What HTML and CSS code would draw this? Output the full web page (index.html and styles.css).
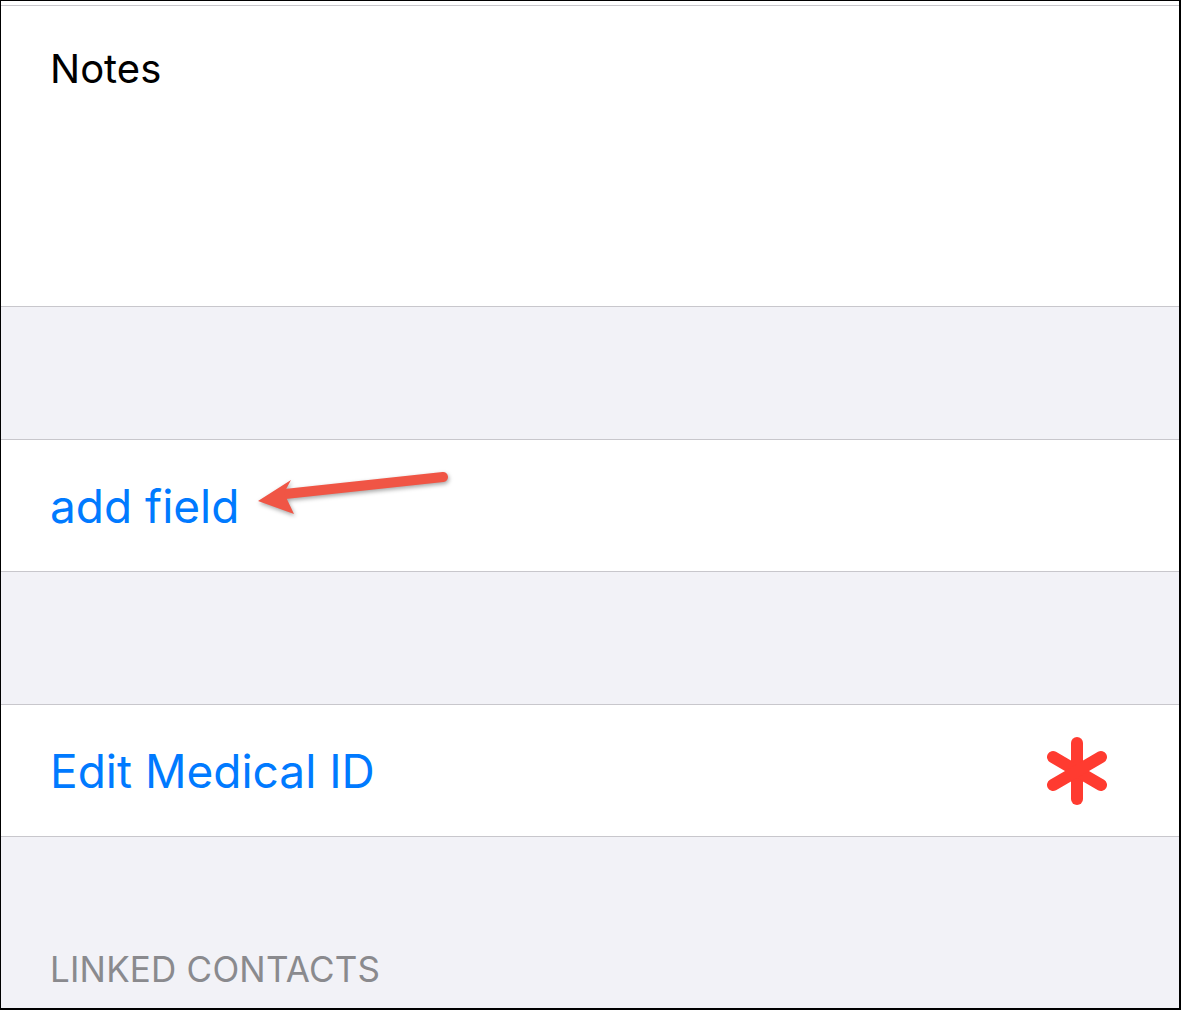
FILE: index.html
```html
<!DOCTYPE html>
<html>
<head>
<meta charset="utf-8">
<link rel="stylesheet" href="styles.css">
</head>
<body>
<div class="frame">
  <div class="top-strip"></div>
  <div class="cell notes-cell">
    <span class="label">Notes</span>
  </div>
  <div class="gap"></div>
  <div class="cell row add-row">
    <span class="link">add field</span>
    <svg class="arrow" width="220" height="60" viewBox="240 20 220 60">
      <line x1="442" y1="38" x2="284" y2="55" stroke="#f05545" stroke-width="10" stroke-linecap="round"/>
      <polygon points="257,62 290,41 283,54 293,75" fill="#f05545"/>
    </svg>
  </div>
  <div class="gap"></div>
  <div class="cell row med-row">
    <span class="link">Edit Medical ID</span>
    <svg class="star" width="72" height="72" viewBox="0 0 72 72">
      <g stroke="#ff3b30" stroke-width="12" stroke-linecap="round">
        <line x1="36" y1="8" x2="36" y2="64"/>
        <line x1="12" y1="22" x2="60" y2="50"/>
        <line x1="12" y1="50" x2="60" y2="22"/>
      </g>
    </svg>
  </div>
  <div class="footer-section">
    <span class="header">LINKED CONTACTS</span>
  </div>
</div>
</body>
</html>
```
FILE: styles.css
```css
html, body {
  margin: 0;
  padding: 0;
  background: #ffffff;
}
body {
  font-family: Inter, "Noto Sans", "Liberation Sans", sans-serif;
}
.frame {
  width: 1181px;
  height: 1010px;
  box-sizing: border-box;
  border-top: 1px solid #000;
  border-left: 1px solid #000;
  border-right: 2px solid #000;
  border-bottom: 2px solid #000;
  background: #f2f2f7;
  display: flex;
  flex-direction: column;
  overflow: hidden;
}
.top-strip {
  height: 4px;
  background: #ffffff;
  border-bottom: 1px solid #c8c7cc;
  flex: none;
}
.cell {
  background: #ffffff;
  border-bottom: 1px solid #c8c7cc;
  box-sizing: border-box;
  flex: none;
}
.notes-cell {
  height: 301px;
  padding: 39px 0 0 49px;
}
.label {
  font-size: 40px;
  line-height: 48px;
  color: #000;
  display: block;
}
.gap {
  height: 132px;
  flex: none;
}
.row {
  height: 133px;
  border-top: 1px solid #c8c7cc;
  padding: 0 66px 0 49px;
  display: flex;
  align-items: center;
  justify-content: space-between;
  position: relative;
}
.link {
  font-size: 46px;
  line-height: 54px;
  color: #007aff;
}
.arrow {
  position: absolute;
  left: 240px;
  top: 19px;
  filter: drop-shadow(1px 2px 2px rgba(0,0,0,0.35));
}
.star {
  display: block;
}
.footer-section {
  flex: 1;
  padding: 111px 0 0 49px;
}
.header {
  font-size: 35px;
  line-height: 42px;
  color: #8a8a8e;
  display: block;
  letter-spacing: 0.2px;
}
```
